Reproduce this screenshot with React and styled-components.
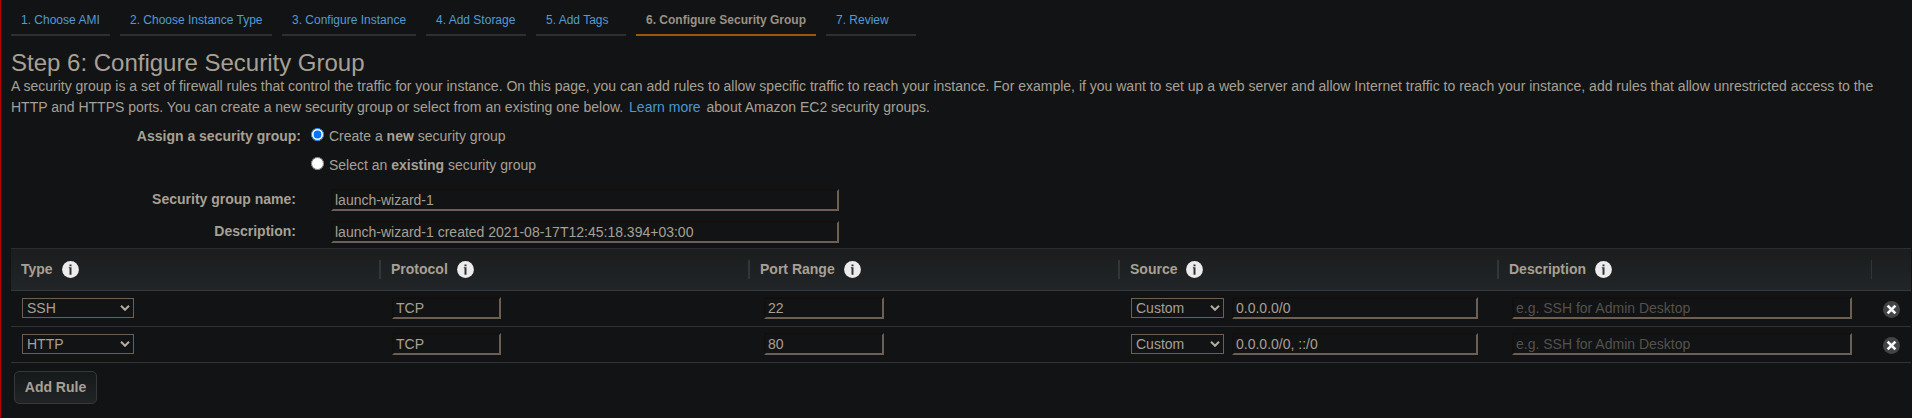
import React from 'react';
import styled, { createGlobalStyle } from 'styled-components';

const GlobalStyle = createGlobalStyle`
  * { box-sizing: border-box; }
  body {
    margin: 0;
    background: #111314;
    color: #a8a095;
    font: 14px/21px "Liberation Sans", Arial, sans-serif;
  }
`;

const Page = styled.main`
  height: 418px;
  overflow: hidden;
  border-left: 1px solid #b80000;
  padding-left: 10px;
`;

const Tabs = styled.nav`
  display: flex;
  gap: 10px;
  height: 36px;
`;

const Tab = styled.a`
  width: ${(p) => p.$width}px;
  padding: 11px 0 0 10px;
  border-bottom: 2px solid ${(p) => (p.$active ? '#9c5708' : '#2d2f31')};
  color: ${(p) => (p.$active ? '#9c9184' : '#539bd4')};
  font-size: 12px;
  line-height: 18px;
  font-weight: ${(p) => (p.$active ? 'bold' : 'normal')};
  white-space: nowrap;
`;

const Title = styled.h1`
  margin: 13px 0 0;
  font-size: 24px;
  line-height: 27px;
  font-weight: normal;
`;

const Intro = styled.p`
  margin: 0;
  height: 42px;
  padding-right: 20px;
`;

const Link = styled.a`
  margin: 0 2px;
  color: #4a98d6;
`;

const Form = styled.div`
  height: 130px;
  padding-top: 8px;
`;

const Choice = styled.label`
  display: grid;
  grid-template-columns: 290px 13px 1fr;
  height: 29px;
`;

const Caption = styled.b`
  text-align: right;
`;

const Radio = styled.input`
  width: 13px;
  height: 13px;
  margin: 2px 0 0 10px;
`;

const ChoiceText = styled.span`
  margin-left: 15px;
`;

const Field = styled.label`
  display: grid;
  grid-template-columns: 285px 508px;
  column-gap: 35px;
  height: 32px;
  padding-top: ${(p) => p.$offset || 0}px;
`;

const TextInput = styled.input`
  width: ${(p) => p.$width}px;
  height: 22px;
  margin: 0 0 0 ${(p) => p.$left || 0}px;
  padding: 1px 2px;
  border: 2px solid;
  border-color: #120f0c #6b6053 #6b6053 #120f0c;
  background: #111314;
  color: #a8a095;
  font: 14px "Liberation Sans", Arial, sans-serif;
  outline: none;
  &::placeholder { color: #55514c; opacity: 1; }
`;

const Table = styled.section`
  width: 1900px;
`;

const columns = '370px 369px 370px 379px 373px 39px';

const HeaderRow = styled.div`
  display: grid;
  grid-template-columns: ${columns};
  align-items: center;
  height: 43px;
  border-top: 1px solid #2b2e30;
  border-bottom: 1px solid #36393b;
  background: linear-gradient(#1b1d1e, #212527);
`;

const HeaderCell = styled.div`
  display: flex;
  align-items: center;
  gap: 9px;
  height: 19px;
  padding-left: 10px;
  border-right: ${(p) => (p.$last ? 0 : p.$thin ? 1 : 2)}px solid #313638;
  font-weight: bold;
`;

const RuleRow = styled.div`
  display: grid;
  grid-template-columns: ${columns};
  height: 36px;
  padding-top: 6px;
  border-bottom: 1px solid #303234;
`;

const Cell = styled.div`
  display: flex;
  align-items: flex-start;
  padding-left: ${(p) => p.$left}px;
`;

const RemoveButton = styled.button`
  display: flex;
  margin: 4px 0 0;
  padding: 0;
  border: 0;
  background: none;
`;

const SelectBox = styled.button`
  display: flex;
  align-items: center;
  justify-content: space-between;
  width: ${(p) => p.$width}px;
  height: 20px;
  margin: 1px 0 0;
  padding: 0 3px 0 4px;
  border: 1px solid #6b6053;
  background: #111314;
  color: #a8a095;
  font: 14px/18px "Liberation Sans", Arial, sans-serif;
`;

const AddButton = styled.button`
  width: 83px;
  height: 33px;
  margin: 8px 0 0 3px;
  padding: 0 0 2px;
  border: 1px solid #33393b;
  border-radius: 5px;
  background: linear-gradient(#15191a, #202426);
  color: #a8a095;
  font: bold 14px "Liberation Sans", Arial, sans-serif;
`;

const InfoIcon = () => (
  <svg width="17" height="17" viewBox="0 0 17 17">
    <circle cx="8.5" cy="8.5" r="8.4" fill="#ececec" />
    <path d="M7.5 3.5h2v1.8h-2zM6.8 6.3h2.7v7.4h-2V7.3h-.7z" fill="#333" />
  </svg>
);

const RemoveIcon = () => (
  <svg width="17" height="17" viewBox="0 0 17 17">
    <circle cx="8.5" cy="8.5" r="8.5" fill="#444" />
    <path d="M4.6 4.6l7.8 7.8M12.4 4.6l-7.8 7.8" stroke="#f8f8f8" strokeWidth="2.7" />
  </svg>
);

const Select = ({ value, width }) => (
  <SelectBox $width={width}>
    {value}
    <svg width="10" height="6" viewBox="0 0 10 6" fill="none">
      <path d="M1 .8l4 4 4-4" stroke="#b5ada2" strokeWidth="2" />
    </svg>
  </SelectBox>
);

const steps = [
  ['1. Choose AMI', 99], ['2. Choose Instance Type', 152], ['3. Configure Instance', 134],
  ['4. Add Storage', 100], ['5. Add Tags', 90], ['6. Configure Security Group', 180], ['7. Review', 90],
];

const headings = ['Type', 'Protocol', 'Port Range', 'Source', 'Description'];

const rules = [
  { type: 'SSH', protocol: 'TCP', port: '22', source: '0.0.0.0/0' },
  { type: 'HTTP', protocol: 'TCP', port: '80', source: '0.0.0.0/0, ::/0' },
];

export default function App() {
  return (
    <Page>
      <GlobalStyle />
      <Tabs>
        {steps.map(([name, width], i) => (
          <Tab key={name} $width={width} $active={i === 5}>{name}</Tab>
        ))}
      </Tabs>
      <Title>Step 6: Configure Security Group</Title>
      <Intro>
        A security group is a set of firewall rules that control the traffic for your instance. On this page, you can add rules to allow specific traffic to reach your instance. For example, if you want to set up a web server and allow Internet traffic to reach your instance, add rules that allow unrestricted access to the HTTP and HTTPS ports. You can create a new security group or select from an existing one below. <Link>Learn more</Link> about Amazon EC2 security groups.
      </Intro>
      <Form>
        <Choice>
          <Caption>Assign a security group:</Caption>
          <Radio type="radio" name="group" defaultChecked />
          <ChoiceText>Create a <b>new</b> security group</ChoiceText>
        </Choice>
        <Choice>
          <Caption />
          <Radio type="radio" name="group" />
          <ChoiceText>Select an <b>existing</b> security group</ChoiceText>
        </Choice>
        <Field $offset={5}>
          <Caption>Security group name:</Caption>
          <TextInput $width={508} defaultValue="launch-wizard-1" />
        </Field>
        <Field $offset={5}>
          <Caption>Description:</Caption>
          <TextInput $width={508} defaultValue="launch-wizard-1 created 2021-08-17T12:45:18.394+03:00" />
        </Field>
      </Form>
      <Table>
        <HeaderRow>
          {headings.map((h, i) => (
            <HeaderCell key={h} $thin={i === 4}>{h}<InfoIcon /></HeaderCell>
          ))}
          <HeaderCell $last />
        </HeaderRow>
        {rules.map((r) => (
          <RuleRow key={r.type}>
            <Cell $left={11}><Select value={r.type} width={112} /></Cell>
            <Cell $left={11}><TextInput $width={109} defaultValue={r.protocol} /></Cell>
            <Cell $left={14}><TextInput $width={120} defaultValue={r.port} /></Cell>
            <Cell $left={11}>
              <Select value="Custom" width={93} />
              <TextInput $width={246} $left={8} defaultValue={r.source} />
            </Cell>
            <Cell $left={13}><TextInput $width={340} placeholder="e.g. SSH for Admin Desktop" /></Cell>
            <Cell $left={11}><RemoveButton aria-label="Remove rule"><RemoveIcon /></RemoveButton></Cell>
          </RuleRow>
        ))}
      </Table>
      <AddButton>Add Rule</AddButton>
    </Page>
  );
}
